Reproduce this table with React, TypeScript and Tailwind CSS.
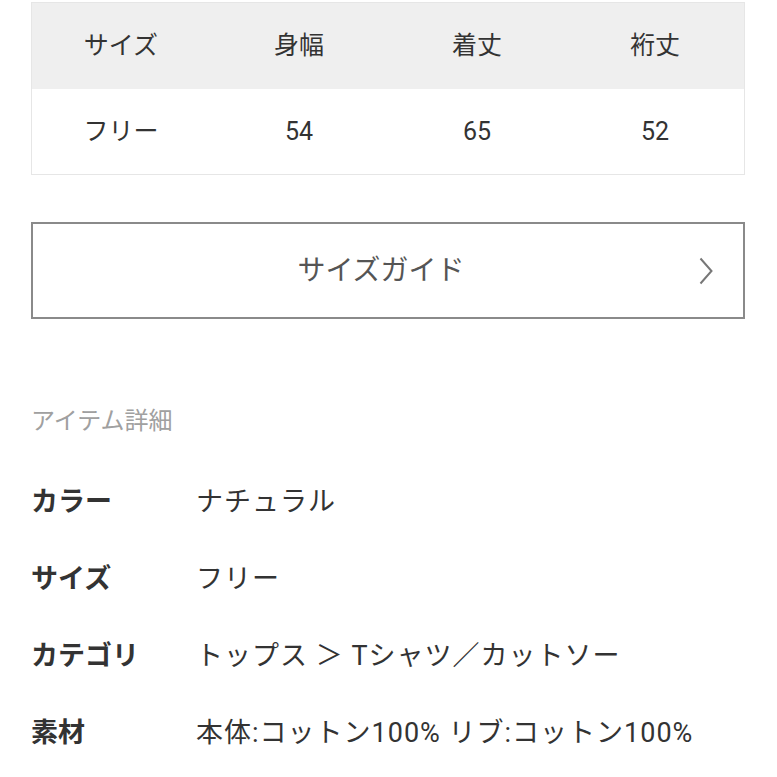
const cols = ["サイズ", "身幅", "着丈", "裄丈"];
const vals = ["フリー", "54", "65", "52"];

const details = [
  { label: "カラー", value: "ナチュラル" },
  { label: "サイズ", value: "フリー" },
  { label: "カテゴリ", value: "トップス ＞ Tシャツ／カットソー" },
  { label: "素材", value: "本体:コットン100% リブ:コットン100%" },
];

export default function App() {
  return (
    <div
      className="w-[777px] h-[777px] bg-white text-[#333] overflow-hidden"
      style={{ fontFamily: "Roboto, 'Noto Sans CJK JP', sans-serif" }}
    >
      <div className="pl-[31px] pr-[32px] pt-[2px]">
        {/* size table */}
        <div className="border border-[#e6e6e6]">
          <div className="grid grid-cols-4 h-[86px] bg-[#efefef] items-center">
            {cols.map((c) => (
              <div key={c} className="text-center text-[25px]">{c}</div>
            ))}
          </div>
          <div className="grid grid-cols-4 h-[85px] bg-white items-center">
            {vals.map((v, i) => (
              <div key={i} className="text-center text-[25px]">{v}</div>
            ))}
          </div>
        </div>

        {/* size guide button */}
        <div className="mt-[47px] h-[97px] border-2 border-[#8a8a8a] flex items-center justify-center relative">
          <span className="text-[28px] text-[#555] -ml-[14px]">サイズガイド</span>
          <svg className="absolute right-[30px] top-[33px]" width="14" height="28" viewBox="0 0 14 28" fill="none">
            <polyline points="1.5,1.5 12.5,14 1.5,26.5" stroke="#777" strokeWidth="2" />
          </svg>
        </div>

        {/* item detail */}
        <div className="mt-[84px] text-[24px] text-[#a0a0a0]">アイテム詳細</div>

        <div className="mt-[45px] flex flex-col gap-[40px]">
          {details.map((d) => (
            <div key={d.label} className="flex items-center h-[37px]">
              <div className="w-[165px] text-[27px] font-bold text-[#333]">{d.label}</div>
              <div className="text-[27px] tracking-[1px] text-[#333] whitespace-nowrap">{d.value}</div>
            </div>
          ))}
        </div>
      </div>
    </div>
  );
}
